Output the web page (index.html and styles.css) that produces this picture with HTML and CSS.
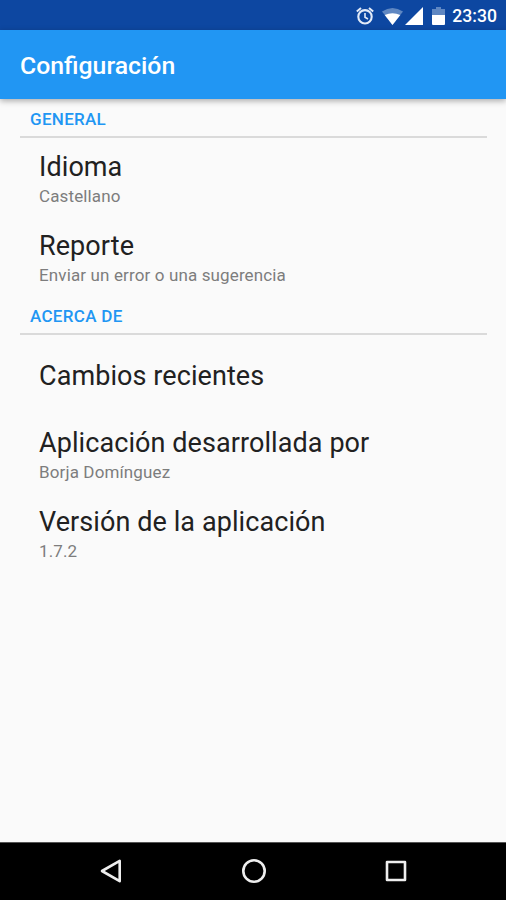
FILE: index.html
```html
<!DOCTYPE html>
<html lang="es">
<head>
<meta charset="utf-8">
<title>Configuración</title>
<link rel="stylesheet" href="styles.css">
</head>
<body>
<div class="screen">
  <div class="status">
    <svg class="alarm" width="18" height="20" viewBox="0 0 18 20" fill="none" stroke="#e3ebf8"><circle cx="9" cy="10.8" r="6.7" stroke-width="2.1"/><path d="M9 7v4.2l3 1.8" stroke-width="1.6"/><path d="M.8 5.4 5 1.9M17.2 5.4 13 1.9" stroke-width="2"/></svg>
    <svg class="wifi" width="21" height="18" viewBox="0 0 21 18"><path fill="#5f87c2" d="M0 4.5Q10.5-2.5 21 4.5L10.5 18z"/><path fill="#fff" d="M2.7 8Q10.5 4.4 18.3 8L10.5 18z"/></svg>
    <svg class="signal" width="18" height="18" viewBox="0 0 18 18"><path fill="#fff" d="M18 0v18H0z"/></svg>
    <svg class="battery" width="13" height="18" viewBox="0 0 13 18"><path fill="#5f87c2" d="M4 0h5v2h4v6H0V2h4z"/><path fill="#fff" d="M0 8h13v9q0 1-1 1H1q-1 0-1-1z"/></svg>
    <span class="time">23:30</span>
  </div>
  <header class="bar"><h1>Configuración</h1></header>
  <main>
    <h2>GENERAL</h2>
    <div class="item"><div class="title">Idioma</div><div class="sub">Castellano</div></div>
    <div class="item"><div class="title">Reporte</div><div class="sub">Enviar un error o una sugerencia</div></div>
    <h2 class="about">ACERCA DE</h2>
    <div class="item single"><div class="title">Cambios recientes</div></div>
    <div class="item"><div class="title">Aplicación desarrollada por</div><div class="sub">Borja Domínguez</div></div>
    <div class="item"><div class="title">Versión de la aplicación</div><div class="sub">1.7.2</div></div>
  </main>
  <nav>
    <svg width="26" height="26" viewBox="0 0 26 26"><path d="M21.7 2.8v20.4L4 13z"/></svg>
    <svg width="26" height="26" viewBox="0 0 26 26"><circle cx="13" cy="13" r="10.7"/></svg>
    <svg width="26" height="26" viewBox="0 0 26 26"><path d="M4 4h18v18H4z"/></svg>
  </nav>
</div>
</body>
</html>
```
FILE: styles.css
```css
* { box-sizing: border-box; }
body { margin: 0; font-family: Roboto, sans-serif; }
.screen { width: 506px; height: 900px; display: flex; flex-direction: column; background: #fafafa; overflow: hidden; }
.status { height: 30px; flex: none; background: #0d47a1; display: flex; align-items: center; justify-content: flex-end; padding: 1px 9px 0 0; }
.alarm { margin-right: 8px; }
.wifi { margin-right: 2px; }
.signal { margin-right: 9px; }
.battery { margin-right: 7px; }
.time { color: #fff; font-size: 17.6px; font-weight: 500; line-height: 20px; }
.bar { height: 69px; flex: none; background: #2196f3; display: flex; align-items: center; padding: 1px 20px 0; box-shadow: 0 2px 6px rgba(0,0,0,.32); }
h1 { margin: 0; font-size: 24.8px; font-weight: 500; color: #fff; }
main { flex: 1; padding: 0 19px 0 20px; }
h2 { margin: 0; height: 39px; padding: 10px 10px 0; border-bottom: 2px solid #dadada; font-size: 17px; line-height: 20px; font-weight: 500; letter-spacing: .3px; color: #2196f3; }
.about { height: 40px; padding-top: 11px; }
.item { height: 78.5px; padding: 12px 19px 0; }
.title { font-size: 27px; line-height: 34px; letter-spacing: .08px; color: #212121; white-space: nowrap; }
.sub { font-size: 17px; line-height: 24px; letter-spacing: .13px; color: #7d7d7d; }
.single { height: 79px; padding-top: 24px; }
nav { height: 58px; flex: none; background: #000; border-top: 1px solid #555; display: flex; justify-content: center; gap: 116.5px; align-items: center; padding: 0 0 1px 1px; }
nav svg { fill: none; stroke: #eee; stroke-width: 2.6; stroke-linejoin: round; }
```
